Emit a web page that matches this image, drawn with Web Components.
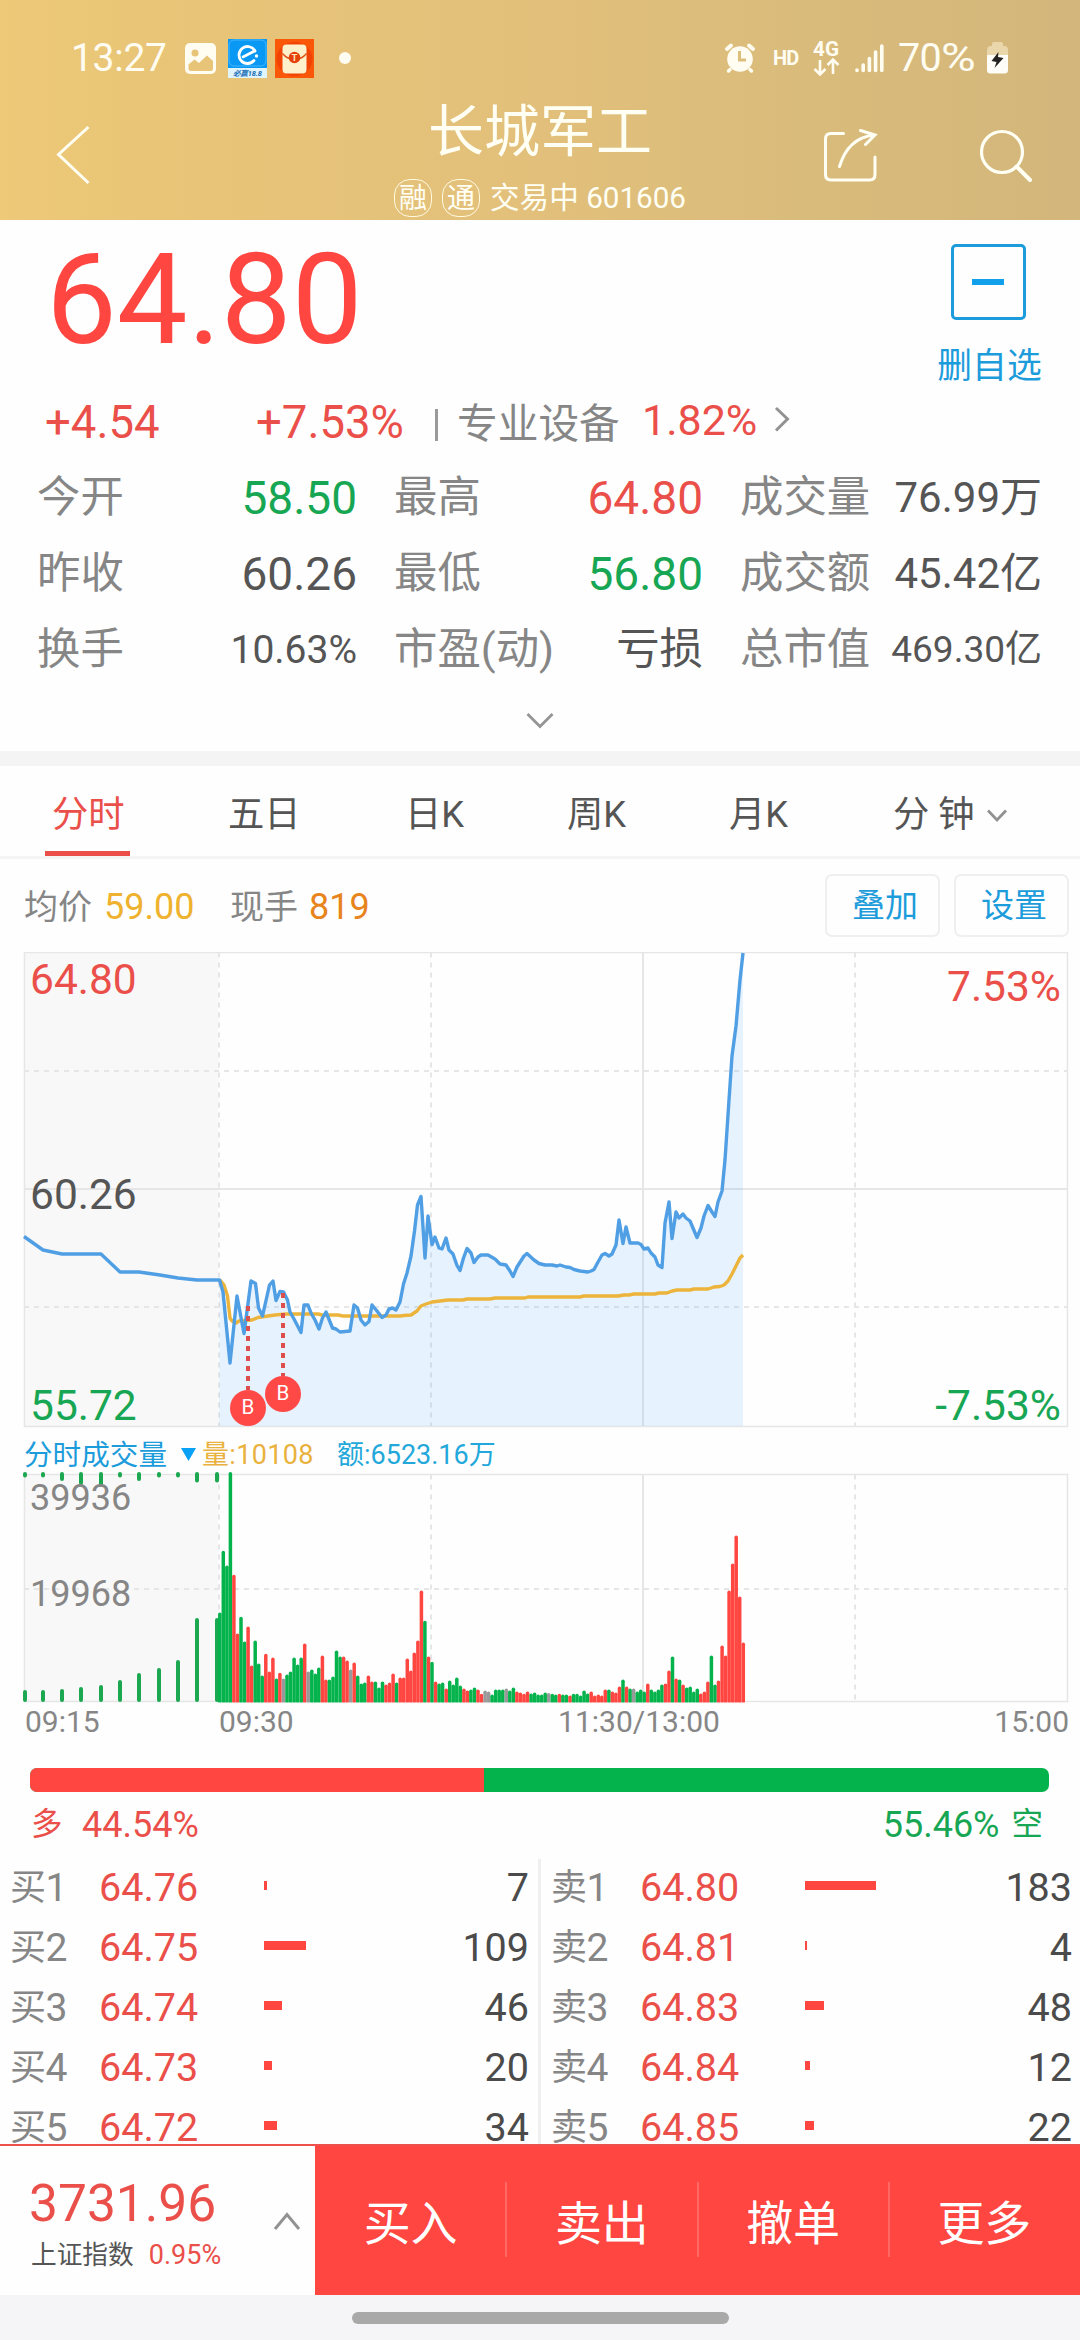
<!DOCTYPE html>
<html lang="zh-CN">
<head>
<meta charset="utf-8">
<title>长城军工 601606</title>
<style>
html,body{margin:0;padding:0;background:#fefefe}
body{width:1080px;height:2340px;overflow:hidden;font-family:Roboto,"Noto Sans CJK SC",sans-serif;
--red:#ea4f4a;--green:#17a653;--grey:#868686;--dark:#555;--blue:#1c9cdb}
</style>
</head>
<body>
<stock-page></stock-page>
<script>
const define=(name,html,after)=>customElements.define(name,class extends HTMLElement{
  connectedCallback(){
    if(this.shadowRoot)return;
    const root=this.attachShadow({mode:'open'});
    root.innerHTML=typeof html==='function'?html(this):html;
    if(after)after(this,root);
  }
});
const R='#ff4641',G='#04b34b',N='#999';

define('status-bar',`<style>
:host{display:flex;align-items:center;height:40px;padding:38px 72px 0 71px;color:#fffdf2;line-height:40px;font-size:39px}
svg{display:block;flex:none;overflow:visible}.sp{flex:1}.t{letter-spacing:-.3px;width:114px}.hd{font-size:20px;font-weight:700;margin-left:18px;width:40px;letter-spacing:-.8px}
.p{margin-left:14px;width:89px;white-space:nowrap;font-size:39.5px;letter-spacing:-.6px}.p b{display:inline-block;font-weight:400;transform:scaleX(1.2);transform-origin:0 50%}
</style>
<span class="t">13:27</span>
<svg width="31" height="31" viewBox="0 0 31 31"><rect width="31" height="31" rx="5" fill="#fffdf2"/><circle cx="10" cy="10" r="3.5" fill="#e7c478"/><path d="M3.500 21.500 9.500 16.500 14 20 22 12.500 28 18V25.500Q28 28 25.500 28H6Q3.500 28 3.500 25.500Z" fill="#e7c478"/></svg>
<svg width="39" height="39" viewBox="0 0 39 39" style="margin-left:12px"><rect width="39" height="39" fill="#0998f4"/><rect x="1" y="1" width="37" height="26" rx="5" fill="none" stroke="#58bdfc" stroke-width=".8"/><path d="M27 12A8.500 8.500 0 1 0 26 21.500" fill="none" stroke="#fff" stroke-width="2.800" stroke-linecap="round"/><path d="M15 18 26.500 12" stroke="#fff" stroke-width="2.600" stroke-linecap="round"/><circle cx="28.500" cy="17" r="1.700" fill="#fff"/><path d="M0 29H39V39H0Z" fill="#dff4fd"/><text x="19.500" y="36.500" text-anchor="middle" font-size="7.500" font-weight="700" font-style="italic" fill="#156bb5" textLength="29">必赢18.8</text></svg>
<svg width="39" height="39" viewBox="0 0 39 39" style="margin-left:8px"><rect width="39" height="39" fill="#fb5708"/><ellipse cx="19.500" cy="20" rx="18" ry="17" fill="#f04304"/><rect x="7.500" y="5.500" width="24" height="29" rx="4" fill="#fff0cc"/><path d="M7.500 14.500Q13 21 19.500 20 26 21 31.500 14.500" fill="none" stroke="#e05010" stroke-width="1.300"/><circle cx="19.500" cy="18.500" r="5.800" fill="#e5410c"/><text x="19.500" y="22" text-anchor="middle" font-size="9.500" font-weight="700" fill="#ffe6bd">T</text></svg>
<svg width="12" height="12" viewBox="0 0 12 12" style="margin-left:25px"><circle cx="6" cy="6" r="6" fill="#fffdf2"/></svg>
<span class="sp"></span>
<svg width="30" height="30" viewBox="0 0 30 30" fill="none" stroke="#fffdf2" stroke-linecap="round"><circle cx="15" cy="16" r="12.800" fill="#fffdf2" stroke="none"/><path d="M2 6 6 2.500M28 6 24 2.500" stroke-width="4"/><path d="M5 26.500 3.500 28M25 26.500 26.500 28" stroke-width="3.500"/><path d="M14.500 8V17H21" stroke="#dcbf7d" stroke-width="3" stroke-linecap="butt"/></svg>
<span class="hd">HD</span>
<svg width="27" height="36" viewBox="0 0 27 36"><text x="0" y="15.500" font-size="20" font-weight="700" textLength="26" lengthAdjust="spacingAndGlyphs" fill="#fffdf2">4G</text><path d="M7 20V34M1.500 29 7 34.500 12.500 29M20 34V20M14.500 25 20 19.500 25.500 25" fill="none" stroke="#fffdf2" stroke-width="2.600"/></svg>
<svg width="29" height="30" viewBox="0 0 29 30" style="margin-left:15px" stroke="#fffdf2" stroke-width="3.600" stroke-linecap="round"><path d="M2 27V27.500M8.200 22V27.500M14.400 15.500V27.500M20.600 9V27.500M26.800 3V27.500"/></svg>
<span class="p">70<b>%</b></span>
<svg width="21" height="32" viewBox="0 0 21 32"><rect x="5" y="0" width="11" height="8" rx="2" fill="#e9d6aa"/><path d="M0 8Q0 4 4 4H17Q21 4 21 8V14H0Z" fill="#e9d6aa"/><path d="M0 13H21V28Q21 31.500 17.500 31.500H3.500Q0 31.500 0 28Z" fill="#fffdf8"/><path d="M11.500 10 4.500 19 9.500 20 7.500 26 16.500 16 11 15Z" fill="#222"/></svg>`);

define('title-nav',`<style>
:host{display:grid;grid-template-columns:310px 1fr 310px;height:142px;color:#fffff4}
svg{display:block;flex:none;fill:none;stroke:#fffff4}
.c{text-align:center}
h1{margin:18px 0 0;font-weight:400;font-size:56px;line-height:72px;height:82px}
.s{display:flex;justify-content:center;align-items:center;font-size:29.6px;line-height:40px;height:40px;white-space:pre}
.s b{font-weight:400;font-size:28px;width:36px;height:36px;line-height:37px;border:1.5px solid #fff9df;border-radius:16px;margin-right:10px}
.r{display:flex;padding:51px 0 0 51px;gap:99px}
</style>
<div><svg width="36" height="64" viewBox="0 0 36 64" style="margin:45px 0 0 55px"><path d="M33.500 4 3.500 31.500 33.500 60" stroke-width="3"/></svg></div>
<div class="c"><h1>长城军工</h1><div class="s"><b>融</b><b>通</b><span>交易中 601606</span></div></div>
<div class="r"><svg width="58" height="56" viewBox="0 0 58 56" stroke-width="3" stroke-linecap="round"><path d="M22.500 4.500H10Q4.500 4.500 4.500 10V45.500Q4.500 51 10 51H48.500Q54 51 54 45.500V28"/><path d="M18.500 37.500Q27 9 53 6M39.500 1.500 54 6 44.500 15.500"/></svg>
<svg width="56" height="56" viewBox="0 0 56 56"><circle cx="24" cy="23" r="20.500" stroke-width="3.200"/><path d="M38.500 37.500 52 51" stroke-width="4" stroke-linecap="round"/></svg></div>`);

define('price-head',`<style>
:host{display:block}
.a{display:flex;justify-content:space-between;height:165px;padding:0 17px 0 46px}
.p{font-size:126px;line-height:160px;color:${R}}
.f{display:flex;flex-direction:column;align-items:center;width:150px;padding-top:24px;color:var(--blue);font-size:34.8px}
.f i{flex:none;box-sizing:border-box;width:75px;height:76px;border:3px solid var(--blue);border-radius:5px;display:flex;align-items:center;justify-content:center}
.f i:before{content:"";width:32px;height:6px;background:#12a0ea;margin-top:-1px}
.f span{flex:none;line-height:50px;margin-top:21px;padding-left:3px}
.b{display:flex;align-items:center;height:75px;padding-left:45px;color:var(--red);font-size:45.5px;line-height:75px;white-space:nowrap}
.b span{flex:none}.b u{width:3px;height:32px;background:#9a9a9a;margin-top:4px}
</style>
<div class="a"><span class="p">64.80</span><div class="f"><i></i><span>删自选</span></div></div>
<div class="b"><span style="width:211px">+4.54</span><span style="width:179px">+7.53%</span><u></u>
<span style="font-size:40.700px;color:var(--grey);padding-top:3px;margin-left:19px;width:185px">专业设备</span>
<span style="font-size:43px;margin-top:-4px;width:132px">1.82%</span>
<svg width="16" height="26" viewBox="0 0 16 26" style="margin-top:-7px" fill="none" stroke="#929292" stroke-width="3"><path d="M2 2 13.500 13 2 24.500"/></svg></div>`);

define('stat-cell',el=>`<style>
:host{display:flex;justify-content:space-between;height:76px;line-height:76px;white-space:nowrap}
.l{font-size:43.400px;color:var(--grey)}.v{font-size:${el.getAttribute('size')||46}px;color:var(--${el.getAttribute('tone')||'dark'})}
</style><span class="l">${el.getAttribute('label')}</span><span class="v"><slot></slot></span>`);

define('stat-grid',`<style>
:host{display:block;height:291px}
.g{display:grid;grid-template-columns:320px 309px 302px;column-gap:37px;padding-left:37px}
svg{display:block;margin:24px auto 0}
</style><div class="g">
<stat-cell label="今开" tone="green">58.50</stat-cell><stat-cell label="最高" tone="red">64.80</stat-cell><stat-cell label="成交量" size="42">76.99万</stat-cell>
<stat-cell label="昨收">60.26</stat-cell><stat-cell label="最低" tone="green">56.80</stat-cell><stat-cell label="成交额" size="42">45.42亿</stat-cell>
<stat-cell label="换手" size="39">10.63%</stat-cell><stat-cell label="市盈(动)" size="43.4">亏损</stat-cell><stat-cell label="总市值" size="37">469.30亿</stat-cell></div>
<svg width="28" height="18" viewBox="0 0 28 18" fill="none" stroke="#959595" stroke-width="2.800"><path d="M1.500 2 14 14.500 26.500 2"/></svg>`);

define('period-tabs',`<style>
:host{display:flex;box-sizing:border-box;height:108px;border-top:15px solid #f4f4f4;border-bottom:3px solid #f4f4f4;padding-left:52px;color:var(--dark);font-size:36.300px;line-height:97px;white-space:pre}
span{height:90px}.on{color:var(--red);position:relative}
.on:after{content:"";position:absolute;left:-7px;bottom:0;width:85px;height:5px;background:var(--red)}
svg{margin-left:12px}
</style><span class="on" style="width:176px">分时</span><span style="width:177px">五日</span><span style="width:162px">日K</span><span style="width:162px">周K</span><span style="width:164px">月K</span><span>分 钟<svg width="20" height="14" viewBox="0 0 20 14" style="vertical-align:4px" fill="none" stroke="#929292" stroke-width="2.800"><path d="M1 1.500 10 11 19 1.500"/></svg></span>`);

define('outline-button',`<style>:host{display:block;box-sizing:border-box;width:115px;height:63px;border:2px solid #efefef;border-radius:7px;text-align:center;padding-left:5px;line-height:59px;font-size:33px;color:var(--blue)}</style><slot></slot>`);

define('info-row',`<style>
:host{display:flex;align-items:center;box-sizing:border-box;height:93px;padding:2px 11px 0 24px;font-size:36px;line-height:60px;color:var(--grey)}
.l{font-size:34px}b{font-weight:400}.sp{flex:1}outline-button{margin-top:-2px}outline-button+outline-button{margin-left:14px}
</style><span class="l" style="width:80px">均价</span><b style="color:#efb22e;width:126px">59.00</b><span class="l" style="width:79px">现手</span><b style="color:#e8841c">819</b><span class="sp"></span><outline-button>叠加</outline-button><outline-button>设置</outline-button>`);

const grid=(top,bot,solid,dash)=>`<rect x="24.500" y="${top}" width="194" height="${bot-top}" fill="#f8f8f8"/>
<g fill="none" stroke="#e6e6e6" stroke-width="1.500"><rect x="24.500" y="${top}" width="1043" height="${bot-top}"/>
<g stroke-width="2"><path d="${solid.map(y=>`M24 ${y}H1068`).join('')}M643 ${top}V${bot}"/><path stroke-dasharray="5 5" d="M219 ${top}V${bot}M431 ${top}V${bot}M855 ${top}V${bot}${dash.map(y=>`M24 ${y}H1068`).join('')}"/></g></g>`;

const price='219.5,1280 223,1292 230,1363 237,1296 244,1333.5 251,1281 255.5,1283.5 258.5,1308 262.5,1316 269.5,1285 273,1281 276,1300.5 280,1291.5 283.5,1292 287.5,1300 290,1312 294,1319 301,1332.5 304,1305 308,1305 311,1313 315,1320 319,1329 322.5,1318 326,1312 332.5,1328 336,1329 340,1332 350,1331 354,1305 357.5,1308 361,1320 365,1325 369,1321.5 372,1305 377,1311 382,1317.5 386,1315 389,1309 392.5,1308 396,1310 400,1302 403.5,1284 407,1273 411,1256 414.5,1231 417.5,1205 421,1196.5 425,1258 428,1216 432,1244.5 435,1237 439,1248 442,1249 446,1238 449,1250 453,1254 457,1265.5 460,1270.5 463.5,1258 467,1248.5 471,1253 474,1262.5 478,1257 481,1255 488,1255 495,1259 500,1264 506,1265 510,1271 513,1276.5 517,1267 524,1256 527,1253.5 534,1260 539,1263.5 545,1265 552,1265 557,1266 560,1265 566,1267 570,1267.5 574,1269.5 580,1271 588,1272 591,1271 594,1269.5 598,1262 602,1255 605,1253.5 609,1256 612,1254 616,1245 619,1220 623,1243.5 626,1227 630,1243 638,1243 641,1244.5 644,1249 648,1248 651,1253 655,1257 658,1265 662,1267.5 665,1223 669,1202 672,1238.5 676,1212 679,1218 683,1214 686,1218 690,1221 697,1237.5 701,1228 704,1216 708,1205.5 712,1212 715,1216.5 718,1202 722,1191 725,1160 729,1100 732,1056 736,1026 740,980 743,953';
const open='24,1236.5 43,1250 62,1254 101,1254 120,1272 139,1272 160,1275 178,1278 197,1280 ';
const avg='220,1280 224,1285 227.5,1296 230,1318 232,1321 236,1323 239,1321 252,1320 258,1317.5 268,1316 275,1315 286,1314 318,1314 322,1315 338,1315 343,1316 400,1316 404,1315.5 411,1315 417,1311 421,1306 426,1304 432,1302 440,1301 448,1300 463,1300 467,1299 490,1299 495,1298 525,1298 528,1297 580,1297 584,1296 618,1296 624,1295 629,1295 634,1294 655,1294 659,1293 667,1293 672,1291 677,1290 690,1290 694,1289 708,1289 714,1287 720,1286.5 724,1285 728,1281 732,1274 736,1266 740,1258 743,1255';
const mark=(x,y0,y)=>`<path d="M${x} ${y0}V${y-18}" stroke="#dc4f4c" stroke-width="4" stroke-dasharray="5 5"/><circle cx="${x}" cy="${y}" r="18" fill="#ff4947"/><text x="${x}" y="${y+6}" text-anchor="middle" font-size="20.500" fill="#fff">B</text>`;

define('price-chart',`<style>:host{display:block;height:486px}svg{display:block}</style>
<svg width="1080" height="486" viewBox="0 952 1080 486">${grid(952.5,1426.5,[1189],[1071,1307])}
<polygon points="${price} 743,1426 219,1426" fill="#3d9cff" fill-opacity=".12"/>
<g font-size="42.500"><text x="30" y="994" fill="#ea4f4a">64.80</text><text x="30" y="1208.500" fill="#555">60.26</text><text x="30" y="1419.500" fill="#17a653">55.72</text>
<text x="1061" y="1001" text-anchor="end" fill="#ea4f4a">7.53%</text><text x="1061" y="1419.500" text-anchor="end" fill="#17a653">-7.53%</text></g>
<g fill="none" stroke-width="3.400" stroke-linejoin="round"><polyline points="${avg}" stroke="#ecb43a"/><polyline points="${open+price}" stroke="#509fe4"/></g>
${mark(248,1306,1408)}${mark(283,1293,1394)}</svg>`);

define('volume-head',`<style>
:host{display:flex;align-items:center;height:33px;line-height:34px;padding-left:24px;font-size:27px;white-space:nowrap;color:#22a8da}
</style><span style="font-size:28.600px;width:157px;color:var(--blue)">分时成交量</span><svg width="15" height="13" viewBox="0 0 15 13" style="display:block;margin-right:6px"><path d="M0 0H15L7.500 13Z" fill="#08a1f5"/></svg><span style="color:#e9b13d;width:135px;letter-spacing:.35px">量:10108</span><span>额:6523.16万</span>`);

const bars='578g393g437g157g465r641r591g665g620r737r662g731g767g702r755r713r776g759r776n764g755g713g734g713g671r755n749g761g743g707r779r779g770g692g710g710r722r749n728r767g791g788g767r785r785g803g785g794r788r761r788g773r773r716r752r698r662r512r603g710r726g785r791g788g806r782g794g773g797g806r812r809g803g809r822r812n815n824g809g809g809g806n812g803g815r818r822r815r821g818g824g824g818g820n822g824g822r824g824g827r822g822g827g812g821g815r827r824r827r809r809g815r818r800r779g800r806g806n815g809g815g791r809g815g809g794g791r752r710g776r779g794r803g800g815g806g821r815r785r707g794g782r677r707r512r431r347r530r668r'.match(/\d{3}[rgn]/g)
 .map((s,i)=>`<path d="M${(219.8+3.537*i).toFixed(1)} 1702V${(1421.5+parseInt(s)/3).toFixed(1)}" stroke="${{r:R,g:G,n:N}[s[3]]}"/>`).join('');
const pre=[25,43,62,81,101,120,139,159,178,197,217];
const ticks=pre.map((x,i)=>`M${x} 1474V${[1475.5,1475.5,1479,1483,1484,1475.5,1479,1475.5,1475.5,1480.5,1480.5][i]}M${x} 1700V${[1692,1692,1691,1689,1687,1682,1675,1670,1662,1620,1620][i]}`).join('');
define('volume-chart',`<style>:host{display:block;height:274px}svg{display:block}</style>
<svg width="1080" height="274" viewBox="0 1471 1080 274">${grid(1474.5,1701.5,[],[1589])}
<path d="${ticks}" stroke="#1ca850" stroke-width="4" stroke-linecap="round"/>
<g stroke-width="3.500" stroke-linecap="round">${bars}</g>
<path d="M200 1703.500H760" stroke="#fefefe" stroke-width="2"/>
<g font-size="36" fill="#868686"><text x="30" y="1510">39936</text><text x="30" y="1606">19968</text></g>
<g font-size="30" fill="#868686"><text x="25" y="1731.500">09:15</text><text x="219" y="1731.500">09:30</text><text x="639" y="1731.500" text-anchor="middle">11:30/13:00</text><text x="1069" y="1731.500" text-anchor="end">15:00</text></g></svg>`);

define('power-bar',`<style>
:host{display:block;height:90px;padding-top:23px}
.b{display:flex;height:24px;margin:0 31px 0 30px;border-radius:7px;overflow:hidden;background:${G}}.b i{width:454px;background:${R}}
.t{display:flex;align-items:center;justify-content:space-between;padding:8px 37px 0 31px;line-height:50px;font-size:36px}
.t span{display:flex}small{font-size:31.500px}
</style><div class="b"><i></i></div><div class="t"><span style="color:var(--red)"><small style="width:51px">多</small>44.54%</span><span style="color:var(--green)">55.46%<small style="margin-left:12px">空</small></span></div>`);

define('quote-row',el=>{const a=n=>el.getAttribute(n);return `<style>
:host{display:flex;align-items:center;height:60px;line-height:60px;font-size:39.500px;color:#4b4b4b}
.l{display:flex;width:89px;color:var(--grey);font-size:39px}.l b{font-weight:400;font-size:36px;width:35.500px}
.p{width:165px;color:var(--red)}i{height:9px;background:${R};margin-top:-5px;width:${a('bar')}px}.v{flex:1;text-align:right}
</style><span class="l"><b>${a('side')}</b>${a('level')}</span><span class="p">${a('price')}</span><i></i><span class="v"><slot></slot></span>`});

define('order-book',el=>{
 const col=(side,rows)=>`<div>${rows.map((r,i)=>`<quote-row side="${side}" level="${i+1}" price="${r[0]}" bar="${r[1]}">${r[2]}</quote-row>`).join('')}</div>`;
 return `<style>:host{display:grid;grid-template-columns:519px 3px 520px;grid-template-rows:286px;padding-left:10px;height:286px}u{background:#efefef;margin:1px 0 0 9px;width:3px}div+u+div{margin-left:19px}
:host{grid-template-columns:519px 12px 540px}</style>
${col('买',[['64.76',3,7],['64.75',42,109],['64.74',18,46],['64.73',8,20],['64.72',13,34]])}<u></u>
${col('卖',[['64.80',71,183],['64.81',2,4],['64.83',19,48],['64.84',5,12],['64.85',9,22]]).replace('<div>','<div style="margin:0 9px 0 10px">')}`});

define('trade-bar',`<style>
:host{display:flex;box-sizing:border-box;height:151px;border-top:2px solid #ee514c;background:${R};color:#fff}
.x{width:315px;background:#fefefe;display:flex;align-items:center}
.n{width:242px;padding:10px 0 0 31px}.n p{margin:0;white-space:nowrap}
.n p:first-child{font-size:51.500px;line-height:60px;color:var(--red);margin-left:-2px}
.n p+p{font-size:27px;line-height:43px;color:var(--dark)}small{font-size:25.700px;margin-right:15px}em{font-style:normal;color:var(--red)}
nav{flex:1;display:grid;grid-template-columns:repeat(4,1fr)}
nav span{position:relative;text-align:center;font-size:47px;line-height:156px;height:149px}
nav span+span:before{content:"";position:absolute;left:-1px;top:36px;width:2px;height:75px;background:#ff6863}
</style><div class="x"><div class="n"><p>3731.96</p><p><small>上证指数</small><em>0.95%</em></p></div>
<svg width="28" height="20" viewBox="0 0 28 20" fill="none" stroke="#929292" stroke-width="3"><path d="M2 18 14 3.500 26 18"/></svg></div>
<nav><span>买入</span><span>卖出</span><span>撤单</span><span>更多</span></nav>`);

define('home-bar',`<style>:host{display:block;box-sizing:border-box;height:45px;padding-top:17px;background:#f5f5f8}i{display:block;width:377px;height:12px;border-radius:6px;background:#a9a9a9;margin:0 auto}</style><i></i>`);

define('stock-page',`<style>:host{display:flex;flex-direction:column;height:2340px}header{height:220px;background:linear-gradient(90deg,#edc978 0,#e9c577 12%,#e2c07b 50%,#d9bb7b 75%,#d3b67b 100%)}:host>*{flex:none}</style>
<header><status-bar></status-bar><title-nav></title-nav></header>
<price-head></price-head><stat-grid></stat-grid><period-tabs></period-tabs><info-row></info-row>
<price-chart></price-chart><volume-head></volume-head><volume-chart></volume-chart>
<power-bar></power-bar><order-book></order-book><trade-bar></trade-bar><home-bar></home-bar>`);
</script>
</body>
</html>
